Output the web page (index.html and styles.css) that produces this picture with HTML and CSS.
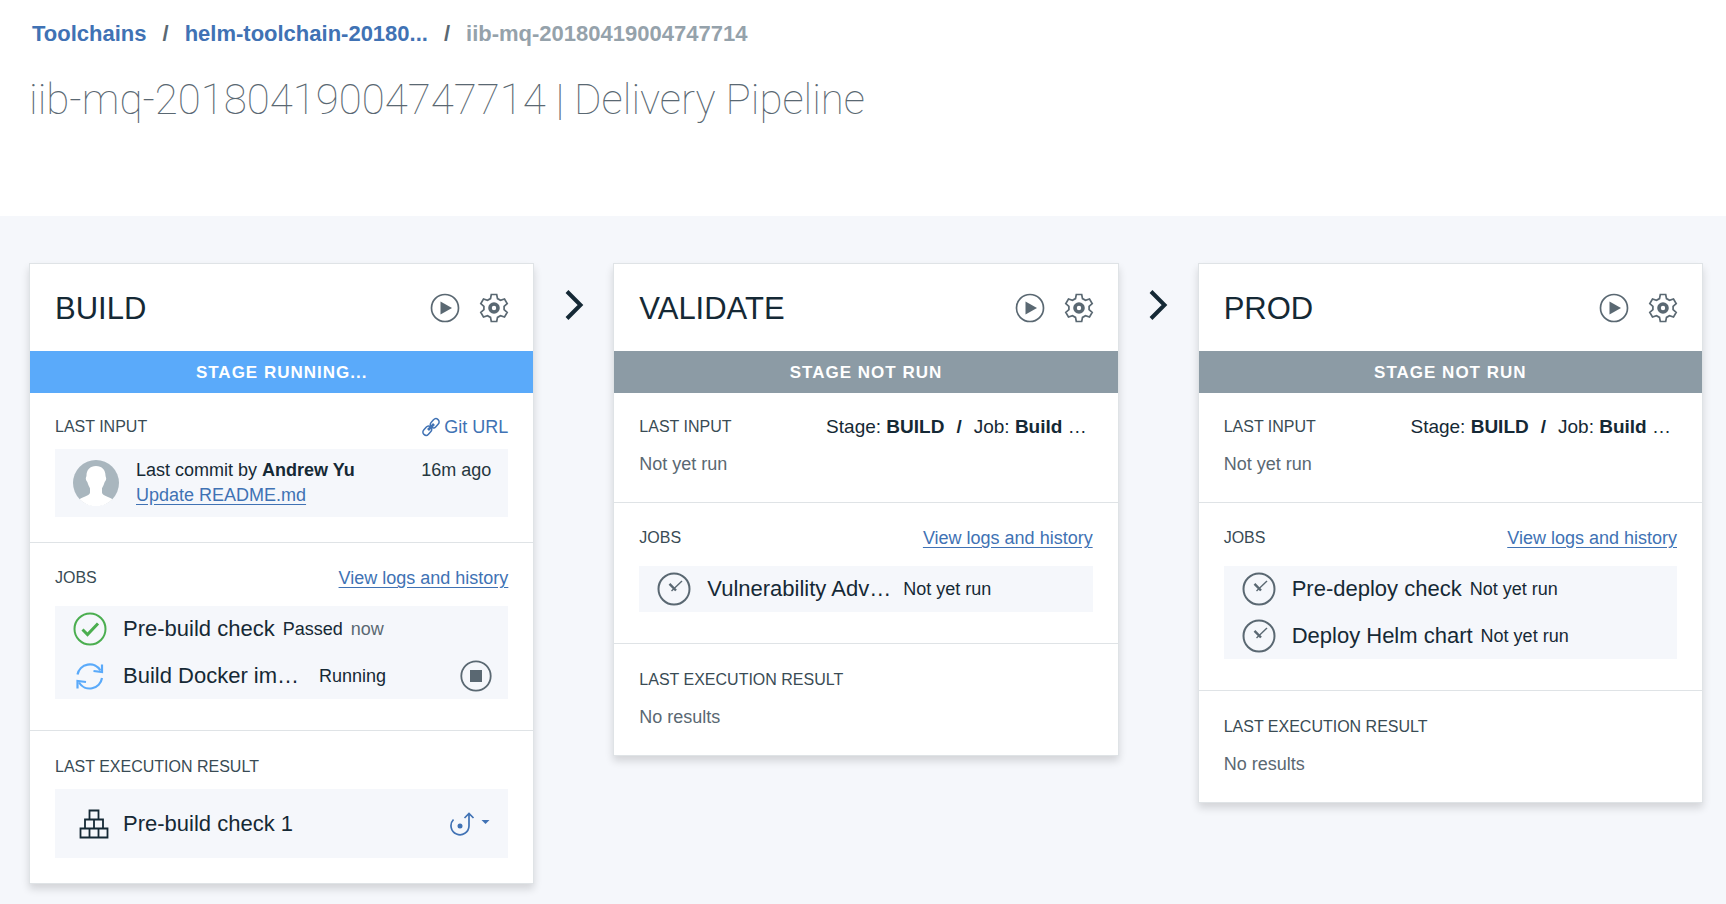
FILE: index.html
```html
<!DOCTYPE html>
<html lang="en">
<head>
<meta charset="utf-8">
<title>Delivery Pipeline</title>
<link rel="stylesheet" href="styles.css">
</head>
<body>
<svg class="defs" aria-hidden="true">
  <symbol id="play" viewBox="0 0 30 30"><circle cx="15" cy="15" r="13.5" fill="none" stroke="currentColor" stroke-width="1.7"/><path d="M10.500 8.500L22 15L10.500 21.500Z" fill="currentColor"/></symbol>
  <symbol id="gear" viewBox="0 0 30 30"><path d="M12.300 1.500h5.400l.8 4.100 3 1.700 4-1.300 2.700 4.600-3.100 2.800v3.200l3.100 2.800-2.700 4.600-4-1.300-3 1.700-.8 4.100h-5.400l-.8-4.100-3-1.700-4 1.300-2.700-4.600 3.100-2.800v-3.200l-3.100-2.800L4.500 6l4 1.300 3-1.700z" fill="none" stroke="currentColor" stroke-width="1.700"/><circle cx="15" cy="15" r="4" fill="none" stroke="currentColor" stroke-width="3.600"/></symbol>
  <symbol id="clock" viewBox="0 0 34 34"><circle cx="17" cy="17" r="15.500" fill="none" stroke="currentColor" stroke-width="2"/><path d="M12.500 11.800L19 18.500" fill="none" stroke="currentColor" stroke-width="2.400"/><path d="M14.500 19L25 9" fill="none" stroke="currentColor" stroke-width="1.400"/></symbol>
</svg>
<header class="page-header">
  <nav class="crumbs" aria-label="Breadcrumb">
    <a href="#">Toolchains</a><span class="slash">/</span><a href="#">helm-toolchain-20180...</a><span class="slash">/</span><span class="current">iib-mq-20180419004747714</span>
  </nav>
  <h1 class="page-title">iib-mq-20180419004747714 | Delivery Pipeline</h1>
</header>
<main class="pipeline">
  <article class="stage">
    <header class="stage-head">
      <h2 class="stage-name">BUILD</h2>
      <button class="icon-button" aria-label="Run stage"><svg class="icon"><use href="#play"/></svg></button>
      <button class="icon-button" aria-label="Configure stage"><svg class="icon"><use href="#gear"/></svg></button>
    </header>
    <p class="status running">STAGE RUNNING...</p>
    <section class="part">
      <div class="row">
        <h3 class="label">LAST INPUT</h3>
        <a class="git" href="#"><svg class="chain" viewBox="0 0 20 20" fill="none" stroke="currentColor" stroke-width="1.5"><rect x="-5" y="-3.200" width="10" height="6.400" rx="3.200" transform="translate(13.700 6.300) rotate(-48)"/><rect x="-5" y="-3.200" width="10" height="6.400" rx="3.200" transform="translate(6.300 13.700) rotate(-48)"/><path d="M7 13L13 7" stroke-width="2.600"/></svg>Git URL</a>
      </div>
      <div class="panel commit">
        <svg class="avatar" viewBox="0 0 46 46"><circle cx="23" cy="23" r="23" fill="#a9b6be"/><path d="M23 6c6 0 9.500 4 9.500 9.500 0 1.500 1 2 .6 3.700-.3 1.500-1 2-1.500 3-.8 3-2.100 4.800-2.600 6.300v4c0 3 6.500 4 10.500 6.800A23 23 0 0 1 6.500 39.300C10.500 36.500 17 35.500 17 32.500v-4c-.5-1.500-1.800-3.300-2.600-6.300-.5-1-1.200-1.500-1.500-3-.4-1.700.6-2.200.6-3.700C13.500 10 17 6 23 6z" fill="#fff"/></svg>
        <div class="commit-text"><p>Last commit by <b>Andrew Yu</b></p><a class="link" href="#">Update README.md</a></div>
        <time class="ago">16m ago</time>
      </div>
    </section>
    <section class="part jobs">
      <div class="row"><h3 class="label">JOBS</h3><a class="link" href="#">View logs and history</a></div>
      <ul class="panel job-list">
        <li class="job">
          <svg class="job-icon passed" viewBox="0 0 34 34" fill="none" stroke="currentColor"><circle cx="17" cy="17" r="15.500" stroke-width="2"/><path d="M9.500 17.500l5 5L25 11.500" stroke-width="3"/></svg>
          <span class="job-name">Pre-build check</span><span>Passed</span><span class="muted">now</span>
        </li>
        <li class="job">
          <svg class="job-icon spin" viewBox="0 0 34 34" fill="none" stroke="currentColor" stroke-width="2.200"><path d="M4.500 15.500A12.500 12.500 0 0 1 27.500 11.500M29 19A12.500 12.500 0 0 1 6 23.500"/><path d="M29 5.500v7.500l-8.500-1M4.500 29.500V22l8.500 1"/></svg>
          <span class="job-name cut">Build Docker im…</span><span>Running</span>
          <button class="icon-button stop" aria-label="Stop job"><svg class="stop-icon" viewBox="0 0 32 32"><circle cx="16" cy="16" r="14.700" fill="none" stroke="currentColor" stroke-width="1.800"/><path d="M10 10h12v12H10z" fill="currentColor"/></svg></button>
        </li>
      </ul>
    </section>
    <section class="part result">
      <div class="row"><h3 class="label">LAST EXECUTION RESULT</h3></div>
      <div class="panel result-panel">
        <svg class="blocks" viewBox="0 0 30 30" fill="none" stroke="currentColor" stroke-width="1.800"><path d="M10.500 1.500h9v9h-9zM6 10.500h18v9H6zM15 10.500v9M1.500 19.500h27v9h-27zM10.500 19.500v9M19.500 19.500v9"/></svg>
        <span class="job-name">Pre-build check 1</span>
        <button class="icon-button deploy" aria-label="Result actions"><svg class="deploy-icon" viewBox="0 0 40 24"><path d="M3.500 7.500A9 9 0 1 0 19 14V2M14.500 6L19 1.500L23.500 6" fill="none" stroke="currentColor" stroke-width="1.700"/><circle cx="10" cy="14" r="2.500" fill="currentColor"/><path d="M31.500 8h8L35.500 12z" fill="currentColor"/></svg></button>
      </div>
    </section>
  </article>
  <svg class="next" viewBox="0 0 20 32"><path d="M3 2.500L16.500 16L3 29.500"/></svg>
  <article class="stage">
    <header class="stage-head">
      <h2 class="stage-name">VALIDATE</h2>
      <button class="icon-button" aria-label="Run stage"><svg class="icon"><use href="#play"/></svg></button>
      <button class="icon-button" aria-label="Configure stage"><svg class="icon"><use href="#gear"/></svg></button>
    </header>
    <p class="status">STAGE NOT RUN</p>
    <section class="part">
      <div class="row"><h3 class="label">LAST INPUT</h3><p class="source">Stage: <b>BUILD</b><b class="sep">/</b>Job: <b>Build</b> …</p></div>
      <p class="note">Not yet run</p>
    </section>
    <section class="part jobs">
      <div class="row"><h3 class="label">JOBS</h3><a class="link" href="#">View logs and history</a></div>
      <ul class="panel job-list">
        <li class="job"><svg class="job-icon"><use href="#clock"/></svg><span class="job-name cut">Vulnerability Adv…</span><span>Not yet run</span></li>
      </ul>
    </section>
    <section class="part result">
      <div class="row"><h3 class="label">LAST EXECUTION RESULT</h3></div>
      <p class="note">No results</p>
    </section>
  </article>
  <svg class="next" viewBox="0 0 20 32"><path d="M3 2.500L16.500 16L3 29.500"/></svg>
  <article class="stage">
    <header class="stage-head">
      <h2 class="stage-name">PROD</h2>
      <button class="icon-button" aria-label="Run stage"><svg class="icon"><use href="#play"/></svg></button>
      <button class="icon-button" aria-label="Configure stage"><svg class="icon"><use href="#gear"/></svg></button>
    </header>
    <p class="status">STAGE NOT RUN</p>
    <section class="part">
      <div class="row"><h3 class="label">LAST INPUT</h3><p class="source">Stage: <b>BUILD</b><b class="sep">/</b>Job: <b>Build</b> …</p></div>
      <p class="note">Not yet run</p>
    </section>
    <section class="part jobs">
      <div class="row"><h3 class="label">JOBS</h3><a class="link" href="#">View logs and history</a></div>
      <ul class="panel job-list">
        <li class="job"><svg class="job-icon"><use href="#clock"/></svg><span class="job-name">Pre-deploy check</span><span>Not yet run</span></li>
        <li class="job"><svg class="job-icon"><use href="#clock"/></svg><span class="job-name">Deploy Helm chart</span><span>Not yet run</span></li>
      </ul>
    </section>
    <section class="part result">
      <div class="row"><h3 class="label">LAST EXECUTION RESULT</h3></div>
      <p class="note">No results</p>
    </section>
  </article>
</main>
</body>
</html>
```
FILE: styles.css
```css
* { box-sizing: border-box; margin: 0; padding: 0; }
body {
  background: #f5f7fb;
  color: #152935;
  font: 18px/24px "Liberation Sans", Arial, sans-serif;
}
svg { display: block; flex: none; }
.defs { display: none; }
a { color: #4072b4; text-decoration: none; }
ul { list-style: none; }

.page-header {
  background: #fff;
  min-height: 216px;
  padding: 20px 29px 0;
}
.crumbs {
  display: flex;
  gap: 16px;
  padding-left: 3px;
  font-size: 22px;
  line-height: 28px;
  font-weight: bold;
}
.slash { color: #5a6872; }
.current { color: #95a2ab; }
.page-title {
  margin-top: 24px;
  color: #5a6872;
  font: 100 42px/56px Roboto, "Liberation Sans", sans-serif;
}

.pipeline {
  display: grid;
  grid-template-columns: 1fr 79px 1fr 79px 1fr;
  align-items: start;
  padding: 47px 23px 20px 29px;
}
.next {
  width: 20px;
  height: 32px;
  margin-top: 26px;
  justify-self: center;
  fill: none;
  stroke: #152935;
  stroke-width: 4;
}
.stage {
  background: #fff;
  border: 1px solid #dfe3e6;
  box-shadow: 0 5px 8px rgba(0, 0, 0, 0.14);
}
.stage-head {
  display: flex;
  align-items: center;
  gap: 19px;
  height: 87px;
  padding: 0 24px 0 25px;
}
.stage-name {
  flex: 1;
  padding-top: 2px;
  font-size: 31px;
  line-height: 40px;
  font-weight: normal;
}
.icon-button {
  border: 0;
  background: none;
  color: #5a6872;
  cursor: pointer;
}
.icon { width: 30px; height: 30px; }
.status {
  padding-top: 2px;
  background: #8c9ba5;
  color: #fff;
  font-size: 17px;
  line-height: 40px;
  font-weight: bold;
  letter-spacing: 1px;
  text-align: center;
}
.running { background: #5aaafa; }

.part { padding: 22px 25px 25px; }
.part + .part { border-top: 1px solid #dfe3e6; }
.part.jobs { padding: 23px 25px 31px; }
.part.result { padding: 24px 25px 25px; }
.row { display: flex; justify-content: space-between; }
.label { color: #394b54; font-size: 16px; font-weight: normal; }
.link { text-decoration: underline; text-underline-offset: 3px; }
.git { display: flex; align-items: center; gap: 3px; }
.chain { width: 20px; height: 20px; }
.source { padding-right: 6px; font-size: 19px; }
.sep { margin: 0 12px; }
.note { margin-top: 12px; color: #5a6872; line-height: 26px; }
.muted { color: #5a6872; }

.panel { margin-top: 10px; background: #f5f7fb; }
.commit {
  display: flex;
  align-items: center;
  gap: 17px;
  min-height: 68px;
  padding: 0 17px 0 18px;
}
.avatar { width: 46px; height: 46px; }
.commit-text { flex: 1; line-height: 25px; }
.ago { align-self: flex-start; padding-top: 9px; color: #26373f; }
.job-list {
  display: grid;
  gap: 1px;
  margin-top: 16px;
}
.job {
  display: flex;
  align-items: center;
  gap: 8px;
  height: 46px;
  padding: 0 16px 0 18px;
}
.job-icon { width: 34px; height: 34px; margin-right: 8px; color: #5a6872; }
.job-icon.passed { color: #4bae50; }
.job-icon.spin { color: #5aaafa; }
.job-name { font-size: 22px; }
.cut {
  width: 188px;
  overflow: hidden;
  text-overflow: ellipsis;
  white-space: nowrap;
}
.stop { margin-left: auto; }
.stop-icon { width: 32px; height: 32px; }
.result-panel {
  display: flex;
  align-items: center;
  gap: 14px;
  min-height: 69px;
  padding: 0 18px 0 24px;
}
.blocks { width: 30px; height: 30px; }
.deploy { margin-left: auto; color: #4072b4; }
.deploy-icon { width: 40px; height: 24px; }
```
